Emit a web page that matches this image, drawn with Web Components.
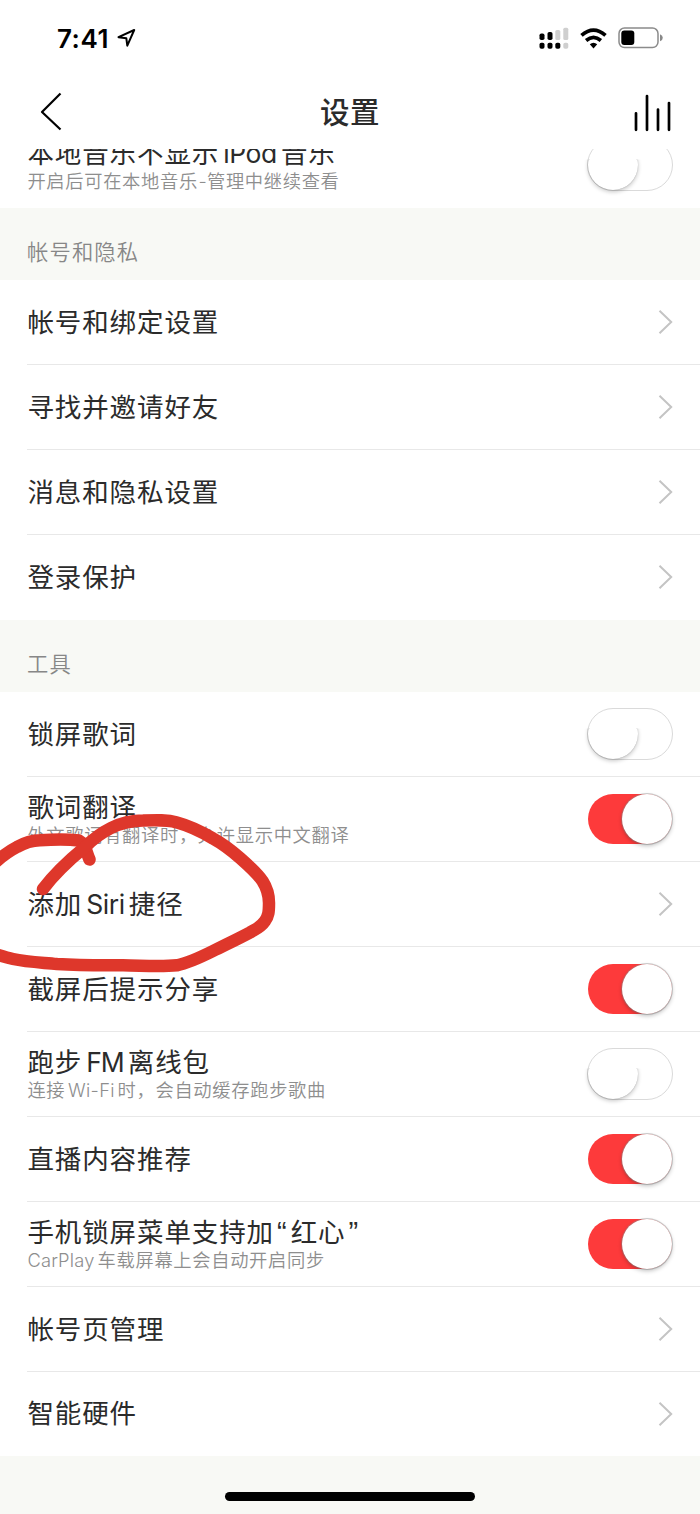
<!DOCTYPE html>
<html lang="zh-CN">
<head>
<meta charset="utf-8">
<title>设置</title>
<style>
html,body{margin:0;background:#fff}
body{width:700px;height:1514px;overflow:hidden;font-family:Inter,"Noto Sans CJK SC",sans-serif;color:#2b2b2b;text-autospace:no-autospace}
</style>
</head>
<body>
<settings-screen>
  <status-bar slot="status">7:41</status-bar>
  <nav-bar slot="nav">设置</nav-bar>
  <setting-row last>本地音乐不显示<latin-run>iPod</latin-run>音乐<span slot="sub">开启后可在本地音乐<latin-run style="--gap:.6px">-</latin-run>管理中继续查看</span><toggle-switch slot="end"></toggle-switch></setting-row>
  <section-title>帐号和隐私</section-title>
  <setting-row>帐号和绑定设置<chevron-icon slot="end"></chevron-icon></setting-row>
  <setting-row>寻找并邀请好友<chevron-icon slot="end"></chevron-icon></setting-row>
  <setting-row>消息和隐私设置<chevron-icon slot="end"></chevron-icon></setting-row>
  <setting-row last>登录保护<chevron-icon slot="end"></chevron-icon></setting-row>
  <section-title>工具</section-title>
  <setting-row>锁屏歌词<toggle-switch slot="end"></toggle-switch></setting-row>
  <setting-row>歌词翻译<span slot="sub">外文歌词有翻译时，允许显示中文翻译</span><toggle-switch slot="end" on></toggle-switch></setting-row>
  <setting-row>添加<latin-run>Siri</latin-run>捷径<chevron-icon slot="end"></chevron-icon></setting-row>
  <setting-row>截屏后提示分享<toggle-switch slot="end" on></toggle-switch></setting-row>
  <setting-row>跑步<latin-run style="--track:-1px">FM</latin-run>离线包<span slot="sub">连接<latin-run style="--track:.3px;--gap:2.8px">Wi-Fi</latin-run>时，会自动缓存跑步歌曲</span><toggle-switch slot="end"></toggle-switch></setting-row>
  <setting-row>直播内容推荐<toggle-switch slot="end" on></toggle-switch></setting-row>
  <setting-row>手机锁屏菜单支持加<latin-run class="q">“</latin-run>红心<latin-run class="q">”</latin-run><span slot="sub"><latin-run style="--lead:0px;--gap:3px;--track:.2px">CarPlay</latin-run>车载屏幕上会自动开启同步</span><toggle-switch slot="end" on></toggle-switch></setting-row>
  <setting-row>帐号页管理<chevron-icon slot="end"></chevron-icon></setting-row>
  <setting-row last style="height:84px">智能硬件<chevron-icon slot="end"></chevron-icon></setting-row>
  <home-indicator slot="home"></home-indicator>
  <ink-mark slot="ink"></ink-mark>
</settings-screen>
<script>
const define = (name, html) => {
  const t = document.createElement('template');
  t.innerHTML = html.trim();
  customElements.define(name, class extends HTMLElement {
    constructor() {
      super();
      this.attachShadow({ mode: 'open' }).appendChild(t.content.cloneNode(true));
    }
  });
};

define('settings-screen', `
<style>
:host{display:flex;flex-direction:column;position:relative;width:700px;height:1514px;overflow:hidden;background:#f8f9f5}
.list{flex:1;overflow:hidden;min-height:0}
.inner{margin-top:-26px}
</style>
<slot name="status"></slot><slot name="nav"></slot>
<div class="list"><div class="inner"><slot></slot></div></div>
<slot name="home"></slot><slot name="ink"></slot>`);

define('status-bar', `
<style>
:host{display:flex;align-items:center;box-sizing:border-box;height:76px;padding:0 37px 0 57px;background:#fff;color:#000;font:600 26px/30px Inter,sans-serif;letter-spacing:.5px}
.time{padding-top:1px}
.loc{margin-left:8px}
.sp{flex:1}
svg{display:block}
.wifi{margin:0 11px 0 11px}
</style>
<span class="time"><slot></slot></span>
<svg class="loc" width="19" height="20" viewBox="0 0 19 20"><path d="M1.500 9.200 17.200 2 10.300 17.600 9.300 10.200Z" fill="none" stroke="#000" stroke-width="2" stroke-linejoin="round"/></svg>
<span class="sp"></span>
<svg width="30" height="22" viewBox="0 0 30 22"><g fill="#000"><rect x="0.5" y="6.5" width="5" height="6.5" rx="1.8"/><rect x="8.5" y="5" width="5" height="8" rx="1.8"/><rect x=".5" y="15.7" width="5" height="6" rx="1.8"/><rect x="8.5" y="15.7" width="5" height="6" rx="1.8"/><rect x="16.3" y="15.7" width="5" height="6" rx="1.8"/></g><g fill="#cfcfcf"><rect x="16.3" y="3" width="5" height="10" rx="1.6"/><rect x="24.3" y=".7" width="5" height="12.3" rx="1.6"/><rect x="24.3" y="15.7" width="5" height="6" rx="1.8"/></g></svg>
<svg class="wifi" width="27" height="21" viewBox="0 0 27 21"><g fill="none" stroke="#000" stroke-width="3.7"><path d="M1.5 7.4Q13.500-3 25.500 7.4"/><path d="M6.100 12.500Q13.500 6.200 20.900 12.500"/></g><path d="M9.800 16.200Q13.500 13.200 17.200 16.200L13.500 20.400Z"/></svg>
<svg width="45" height="22" viewBox="0 0 45 22"><rect x="1" y="1" width="39" height="19.6" rx="5.5" fill="none" stroke="#8b8b8b" stroke-width="1.5"/><rect x="3.3" y="3.6" width="13" height="14.4" rx="3" fill="#000"/><path d="M42 7.300Q44.800 8.300 44.800 10.800T42 14.300Z" fill="#888"/></svg>`);

define('nav-bar', `
<style>
:host{display:grid;grid-template-columns:1fr auto 1fr;align-items:center;box-sizing:border-box;height:73px;padding:0 28px 0 40px;background:#fff;color:#2b2b2b;font:500 29.5px/44px Inter,"Noto Sans CJK SC",sans-serif;letter-spacing:.5px}
.t{margin-left:-12px;padding-bottom:2px}
svg{display:block;margin-bottom:3px}
.bars{justify-self:end;margin-bottom:1px}
</style>
<svg width="23" height="40" viewBox="0 0 23 40"><path d="M20.500 2.500 2 21 20.500 38.500" fill="none" stroke="#000" stroke-width="2.2" stroke-linejoin="round"/></svg>
<span class="t"><slot></slot></span>
<svg class="bars" width="39" height="40" viewBox="0 0 39 40"><path d="M3 21.300V37.800M14 4V37.800M25 17.500V37.800M36 11V37.800" stroke="#000" stroke-width="2.7" stroke-linecap="round"/></svg>`);

define('section-title', `
<style>
:host{display:flex;align-items:center;box-sizing:border-box;height:72px;padding:12px 28px 0 27px;font-size:21.3px;font-weight:350;letter-spacing:1.15px;color:#878787}
</style><slot></slot>`);

define('setting-row', `
<style>
:host{display:flex;box-sizing:border-box;height:85px;padding-left:27px;background:#fff}
.body{display:flex;flex:1;align-items:center;justify-content:space-between;box-sizing:border-box;border-bottom:1px solid #e8e8e8;padding-right:27px}
:host([last]) .body{border-bottom-color:transparent}
.text{display:flex;flex-direction:column;white-space:nowrap;padding:0 0 1px .4px}
.t{font-size:26.5px;line-height:30px;letter-spacing:.9px;color:#2b2b2b;font-weight:400}
.s{font-size:18.3px;line-height:24px;letter-spacing:.66px;font-weight:350;color:#8e8e8e}
.s.filled{padding-top:1px;margin-bottom:-1px}
</style>
<div class="body"><div class="text"><div class="t"><slot></slot></div><div class="s filled"><slot name="sub"></slot></div></div><slot name="end"></slot></div>`);

define('latin-run', `
<style>
:host{display:inline;letter-spacing:var(--track,-.4px);margin:0 var(--gap,4px) 0 var(--lead,var(--gap,4px))}
:host(.q){font-family:"Liberation Sans",sans-serif;font-size:29px;line-height:0;letter-spacing:0;margin:0 4px 0 3px}
</style><slot></slot>`);

define('toggle-switch', `
<style>
:host{display:block;box-sizing:border-box;width:86px;height:52px;border-radius:26px;border:1.5px solid #dadada;background:#fff}
i{display:block;width:50px;height:50px;margin:-.5px 0 0 -.5px;border-radius:50%;background:#fff;box-shadow:0 2px 4px rgba(0,0,0,.22),0 0 1px rgba(0,0,0,.3)}
:host([on]){background:#fd3a3b;border:0;width:84px;height:50px;margin-right:1px}
:host([on]) i{margin:0 0 0 34px;box-shadow:0 2px 4px rgba(0,0,0,.25),0 0 0 1px rgba(150,150,150,.45)}
:host(:not([on])) i{clip-path:polygon(-10% 40%,200% 40%,200% 130%,-10% 130%)}
</style><i></i>`);

define('chevron-icon', `
<style>:host{display:block}svg{display:block}</style>
<svg width="15" height="26" viewBox="0 0 15 26"><path d="M1.500 1.800 13.200 13 1.500 24.200" fill="none" stroke="#c4c4c4" stroke-width="2"/></svg>`);

define('home-indicator', `
<style>
:host{display:flex;justify-content:center;box-sizing:border-box;height:22px;background:#f8f9f5}
i{width:250px;height:9px;border-radius:5px;background:#000}
</style><i></i>`);

define('ink-mark', `
<style>
:host{position:absolute;left:0;top:800px;pointer-events:none}
svg{display:block}
</style>
<svg width="290" height="180" viewBox="0 0 290 180"><g fill="none" stroke="#de372b" stroke-width="12.5" stroke-linecap="round" stroke-linejoin="round">
<path d="M-8 65C-3 61 5 53 17 47C26 42 32 40.500 40 40.300C53 39.500 70 39.500 79 40.500C86 44 86 52 89.500 59.500"/>
<path d="M43 89C52 77 68 61 85 47C93 39 101 33 111 28C121 23 131 20.500 143 20.500C156 20 167 19.500 177 22.500C190 26 202 32 213 38.500C223 44 232 51 240 58C248 65 257 73 262.500 81C267 88 269 94 269 103C269 112 268.500 116 265 121C261 127 256 129 250 132.500C238 139 226 144.500 213 151C200 157.500 189 163 177 165.300C160 167 142 165.500 123 165.300C101 165.500 79 165.500 57 164C42 162.500 27 162 13 159C6 157.500 0 155.500-8 153"/></g></svg>`);
</script>
</body>
</html>
